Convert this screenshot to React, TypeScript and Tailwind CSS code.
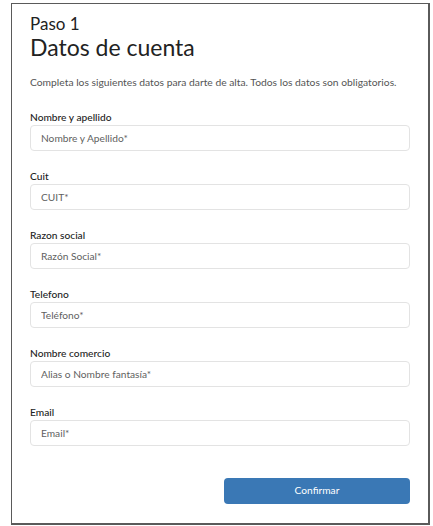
const fields = [
  { label: "Nombre y apellido", placeholder: "Nombre y Apellido*" },
  { label: "Cuit", placeholder: "CUIT*" },
  { label: "Razon social", placeholder: "Razón Social*" },
  { label: "Telefono", placeholder: "Teléfono*" },
  { label: "Nombre comercio", placeholder: "Alias o Nombre fantasía*" },
  { label: "Email", placeholder: "Email*" },
];

export default function App() {
  return (
    <div className="w-[433px] h-[526px] bg-white pt-[3px] pl-[11px] font-['Lato',sans-serif]">
      <div className="w-[419px] h-[522px] border border-[#5a5a5a] border-r-2 border-b-2 bg-white px-[18px] pt-[10px]">
        {/* Heading */}
        <h2 className="text-[17px] leading-[20px] text-[#222]">Paso 1</h2>
        <h1 className="text-[23px] leading-[26px] text-[#222]">Datos de cuenta</h1>
        <p className="mt-[15px] text-[10.3px] leading-[14px] text-[#555]">
          Completa los siguientes datos para darte de alta. Todos los datos son obligatorios.
        </p>

        {/* Fields */}
        <div className="mt-[22px] flex flex-col gap-[19px]">
          {fields.map((f) => (
            <div key={f.label} className="flex flex-col gap-[1px]">
              <label className="text-[10.2px] leading-[13px] font-medium text-[#222]">{f.label}</label>
              <input
                placeholder={f.placeholder}
                className="h-[26px] w-full rounded-[4px] border border-[#e3e3e3] px-[10px] text-[10.2px] text-[#333] placeholder:text-[#5f5f5f] outline-none"
              />
            </div>
          ))}
        </div>

        <div className="mt-[32px] flex justify-end">
          <button className="h-[26px] w-[186px] rounded-[4px] bg-[#3a78b5] text-[10.2px] text-white">
            Confirmar
          </button>
        </div>
      </div>
    </div>
  );
}
